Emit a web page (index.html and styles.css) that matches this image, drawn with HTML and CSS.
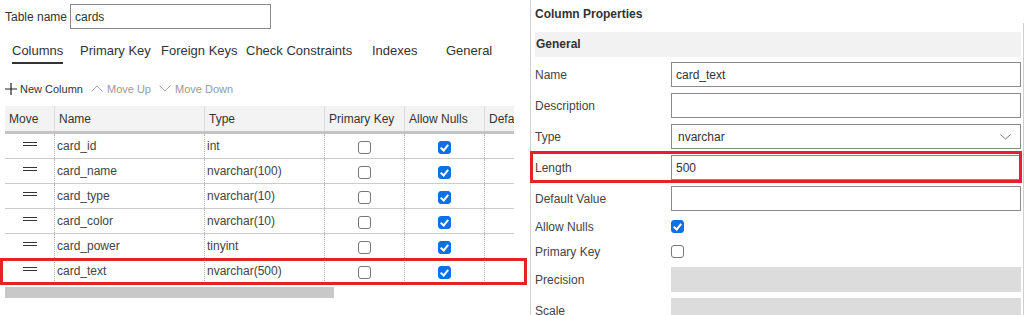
FILE: index.html
```html
<!DOCTYPE html>
<html lang="en">
<head>
  <meta charset="UTF-8">
  <title>Table Designer - cards</title>
  <link rel="stylesheet" href="styles.css">
</head>
<body>

<div class="designer">
  <section class="table-pane">
    <div class="name-row">
      <label for="tableName">Table name</label>
      <input type="text" id="tableName" class="text-input name-input" value="cards">
    </div>

    <nav class="tabs">
      <span class="tab active">Columns</span>
      <span class="tab">Primary Key</span>
      <span class="tab">Foreign Keys</span>
      <span class="tab">Check Constraints</span>
      <span class="tab">Indexes</span>
      <span class="tab">General</span>
    </nav>

    <div class="toolbar">
      <span class="tool">
        <svg width="12" height="12" viewBox="0 0 12 12"><path d="M6 0v12M0 6h12" stroke="#222" stroke-width="1.2" fill="none"/></svg>
        New Column
      </span>
      <span class="tool disabled">
        <svg width="12" height="7" viewBox="0 0 12 7"><path d="M0.5 6.5L6 1l5.5 5.5" stroke="#aaa" fill="none"/></svg>
        Move Up
      </span>
      <span class="tool disabled">
        <svg width="12" height="7" viewBox="0 0 12 7"><path d="M0.5 0.5L6 6l5.5-5.5" stroke="#aaa" fill="none"/></svg>
        Move Down
      </span>
    </div>

    <div class="grid">
      <div class="grid-row grid-head">
        <div class="cell">Move</div>
        <div class="cell">Name</div>
        <div class="cell">Type</div>
        <div class="cell">Primary Key</div>
        <div class="cell">Allow Nulls</div>
        <div class="cell">Default Value</div>
      </div>
      <div class="grid-row">
        <div class="cell move"><span class="handle"></span></div>
        <div class="cell">card_id</div>
        <div class="cell">int</div>
        <div class="cell center"><span class="check"></span></div>
        <div class="cell center"><span class="check on"></span></div>
        <div class="cell"></div>
      </div>
      <div class="grid-row">
        <div class="cell move"><span class="handle"></span></div>
        <div class="cell">card_name</div>
        <div class="cell">nvarchar(100)</div>
        <div class="cell center"><span class="check"></span></div>
        <div class="cell center"><span class="check on"></span></div>
        <div class="cell"></div>
      </div>
      <div class="grid-row">
        <div class="cell move"><span class="handle"></span></div>
        <div class="cell">card_type</div>
        <div class="cell">nvarchar(10)</div>
        <div class="cell center"><span class="check"></span></div>
        <div class="cell center"><span class="check on"></span></div>
        <div class="cell"></div>
      </div>
      <div class="grid-row">
        <div class="cell move"><span class="handle"></span></div>
        <div class="cell">card_color</div>
        <div class="cell">nvarchar(10)</div>
        <div class="cell center"><span class="check"></span></div>
        <div class="cell center"><span class="check on"></span></div>
        <div class="cell"></div>
      </div>
      <div class="grid-row">
        <div class="cell move"><span class="handle"></span></div>
        <div class="cell">card_power</div>
        <div class="cell">tinyint</div>
        <div class="cell center"><span class="check"></span></div>
        <div class="cell center"><span class="check on"></span></div>
        <div class="cell"></div>
      </div>
      <div class="grid-row highlight">
        <div class="cell move"><span class="handle"></span></div>
        <div class="cell">card_text</div>
        <div class="cell">nvarchar(500)</div>
        <div class="cell center"><span class="check"></span></div>
        <div class="cell center"><span class="check on"></span></div>
        <div class="cell"></div>
      </div>
    </div>
    <div class="hscroll"></div>
  </section>

  <section class="props">
    <div class="props-title">Column Properties</div>
    <div class="props-body">
      <div class="section-head">General</div>
      <div class="prop-list">
        <div class="prop">
          <span class="prop-label">Name</span>
          <input type="text" class="text-input" value="card_text">
        </div>
        <div class="prop">
          <span class="prop-label">Description</span>
          <input type="text" class="text-input" value="">
        </div>
        <div class="prop">
          <span class="prop-label">Type</span>
          <div class="select">
            <span>nvarchar</span>
            <svg width="11" height="6" viewBox="0 0 11 6"><path d="M0.5 0.5L5.5 5l5-4.5" stroke="#6b7b92" fill="none"/></svg>
          </div>
        </div>
        <div class="prop highlight">
          <span class="prop-label">Length</span>
          <input type="text" class="text-input" value="500">
        </div>
        <div class="prop">
          <span class="prop-label">Default Value</span>
          <input type="text" class="text-input" value="">
        </div>
        <div class="prop prop-check">
          <span class="prop-label">Allow Nulls</span>
          <span class="check on"></span>
        </div>
        <div class="prop prop-check">
          <span class="prop-label">Primary Key</span>
          <span class="check"></span>
        </div>
        <div class="prop">
          <span class="prop-label">Precision</span>
          <div class="disabled-box"></div>
        </div>
        <div class="prop">
          <span class="prop-label">Scale</span>
          <div class="disabled-box"></div>
        </div>
      </div>
    </div>
  </section>
</div>

</body>
</html>
```

FILE: styles.css
```css
html, body {
  height: 315px;
  overflow: hidden;
}

body {
  margin: 0;
  font-family: 'Liberation Sans', Arial, sans-serif;
  font-size: 12px;
  color: #333;
  background: #fff;
}

.designer {
  display: flex;
  height: 100%;
}

/* left side: table grid */

.table-pane {
  width: 530px;
  flex-shrink: 0;
}

.name-row {
  display: flex;
  align-items: center;
  padding: 4px 0 0 5px;
}

.name-row label {
  width: 65px;
  color: #333;
}

.text-input {
  box-sizing: border-box;
  height: 25px;
  border: 1px solid #8a8a8a;
  padding: 0 4px;
  font-family: inherit;
  font-size: 12px;
  color: #333;
  outline: none;
}

.name-input {
  width: 201px;
}

.tabs {
  display: grid;
  grid-template-columns: 68px 81px 85px 126px 74px auto;
  padding-left: 12px;
}

.tab {
  justify-self: start;
  padding: 14px 0 3px;
  line-height: 16px;
  font-size: 13px;
  color: #333;
  border-bottom: 2px solid transparent;
}

.tab.active {
  border-bottom-color: #333;
}

.toolbar {
  display: flex;
  align-items: center;
  height: 21px;
  margin: 14px 0 7px;
  padding-left: 5px;
  font-size: 11px;
}

.tool {
  display: flex;
  align-items: center;
  gap: 3px;
  margin-right: 8px;
  color: #333;
}

.tool.disabled {
  gap: 4px;
  color: #9a9a9a;
}

.grid {
  margin-left: 5px;
  width: 509px;
}

.grid-row {
  display: grid;
  grid-template-columns: 49px 150px 120px 80px 80px 30px;
  box-sizing: border-box;
  height: 25px;
  border-bottom: 1px solid #cbcbcb;
  position: relative;
}

.grid-head {
  height: 28px;
  background: #f3f3f3;
  border-bottom: 3px solid #c4c4c4;
}

.cell {
  display: flex;
  align-items: center;
  overflow: hidden;
  white-space: nowrap;
  padding-left: 2px;
  border-left: 1px dotted #b4b4b4;
  color: #444;
}

.cell:first-child {
  border-left: none;
}

.grid-head .cell {
  padding-left: 4px;
  border-left: 1px solid #dcdcdc;
  color: #333;
}

.grid-head .cell:first-child {
  border-left: none;
}

.cell.center,
.cell.move {
  justify-content: center;
  padding-left: 0;
}

.handle {
  width: 14px;
  height: 2px;
  border-top: 1px solid #333;
  border-bottom: 1px solid #333;
  margin-bottom: 4px;
}

.check {
  box-sizing: border-box;
  display: inline-block;
  width: 13px;
  height: 13px;
  border: 1px solid #777;
  border-radius: 3px;
  background: #fff;
  position: relative;
}

.cell .check {
  margin-top: 2px;
}

.check.on {
  background: #0f6fe6;
  border-color: #0f6fe6;
}

.check.on::after {
  content: "";
  position: absolute;
  left: 3px;
  top: 1px;
  width: 3px;
  height: 6px;
  border-right: 2px solid #fff;
  border-bottom: 2px solid #fff;
  transform: rotate(40deg);
}

.highlight::after {
  content: "";
  position: absolute;
  border: 3px solid #e8202a;
  pointer-events: none;
}

.grid-row.highlight::after {
  top: -1px;
  left: -5px;
  right: -13px;
  bottom: -2px;
}

.hscroll {
  margin: 3px 0 0 5px;
  width: 329px;
  height: 11px;
  background: #c8c8c8;
}

/* right side: column properties */

.props {
  flex: 1;
  border-left: 1px solid #d2d2d2;
  padding-left: 4px;
}

.props-title {
  padding-top: 5px;
  height: 18px;
  line-height: 18px;
  font-weight: bold;
  color: #333;
}

.props-body {
  margin-right: 3px;
  padding: 9px 2px 0 0;
  border-right: 1px solid #cfcfcf;
  height: 300px;
}

.section-head {
  height: 25px;
  line-height: 25px;
  padding-left: 1px;
  background: #f2f2f2;
  font-weight: bold;
  color: #333;
}

.prop-list {
  display: flex;
  flex-direction: column;
  gap: 6px;
  padding-top: 5px;
}

.prop {
  display: grid;
  grid-template-columns: 136px 1fr;
  align-items: center;
  height: 25px;
  position: relative;
}

.prop .text-input {
  width: 100%;
}

.prop.prop-check {
  height: 19px;
}

.prop-label {
  color: #444;
}

.prop.highlight::after {
  top: -4px;
  left: -5px;
  right: -1px;
  bottom: -3px;
}

.select {
  box-sizing: border-box;
  height: 25px;
  display: flex;
  align-items: center;
  justify-content: space-between;
  padding: 0 9px 0 6px;
  border: 1px solid #8a8a8a;
  color: #333;
}

.disabled-box {
  height: 25px;
  background: #dcdcdc;
}
```
